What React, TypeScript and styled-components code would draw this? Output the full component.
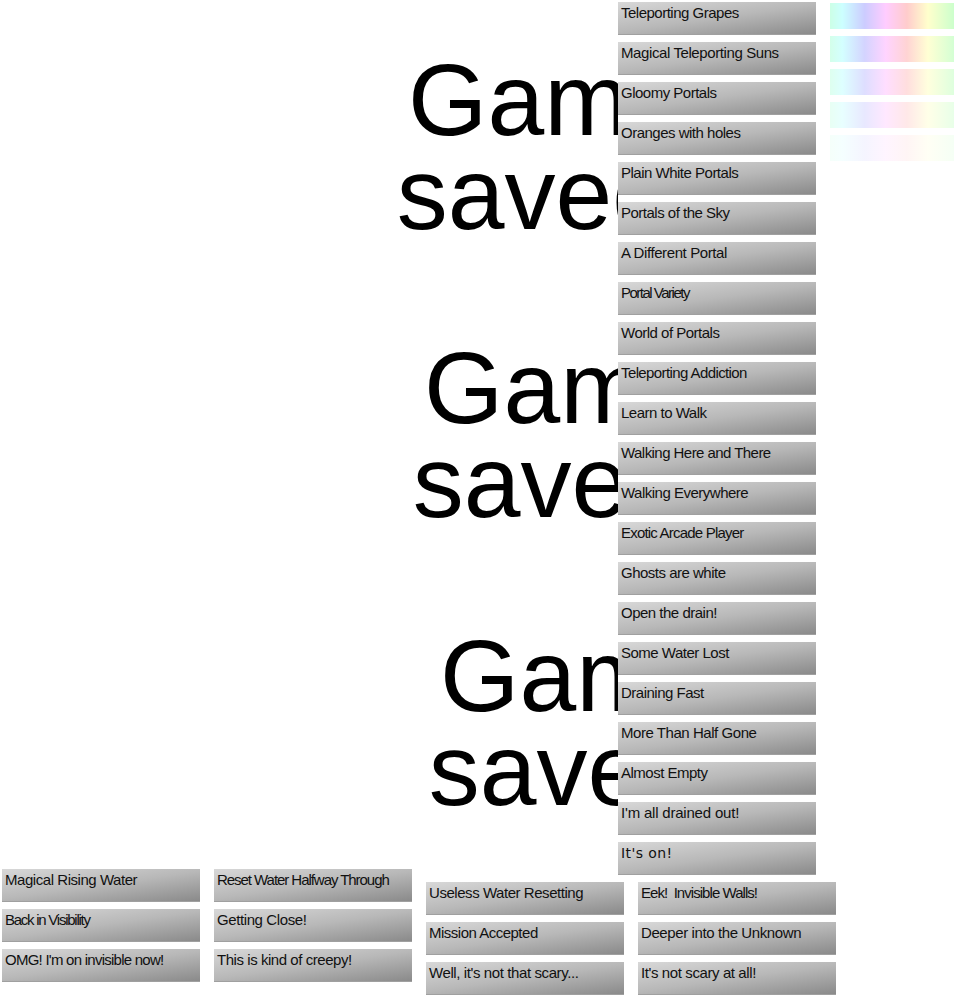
import React from "react";
import styled, { createGlobalStyle } from "styled-components";

const Global = createGlobalStyle`
  html, body { margin: 0; padding: 0; background: #ffffff; }
  body { font-family: "Liberation Sans", Arial, sans-serif; }
`;

const Page = styled.div`
  width: 956px;
  height: 1000px;
  display: flex;
  flex-direction: column;
  overflow: hidden;
`;

const TopSection = styled.div`
  height: 869px;
  display: flex;
  align-items: flex-start;
`;

const ToastArea = styled.div`
  width: 618px;
  height: 869px;
  flex: none;
  overflow: hidden;
  display: flex;
  flex-direction: column;
  align-items: flex-start;
  gap: 100px;
  padding-top: 53px;
  box-sizing: border-box;
`;

const Toast = styled.div<{ $offset: number }>`
  flex: none;
  width: 400px;
  margin-left: ${(p) => p.$offset}px;
  text-align: center;
  font-family: "Liberation Sans", Arial, sans-serif;
  font-size: 102px;
  line-height: 94px;
  color: #000;
`;

const TileColumn = styled.div`
  width: 198px;
  flex: none;
  display: flex;
  flex-direction: column;
  gap: 7px;
  padding-top: 2px;
`;

const Tile = styled.div<{ $spacing: number; $alt?: boolean }>`
  width: 198px;
  height: 33px;
  box-sizing: border-box;
  padding: 1px 3px 0;
  background: linear-gradient(172deg, #d8d8d8 0%, #b8b8b8 50%, #8a8a8a 100%);
  border-bottom: 1px solid #a0a0a0;
  color: #111;
  font-family: ${(p) =>
    p.$alt ? '"DejaVu Sans", Verdana, sans-serif' : '"Liberation Sans", Arial, sans-serif'};
  font-size: ${(p) => (p.$alt ? "14px" : "15px")};
  letter-spacing: ${(p) => p.$spacing}px;
  line-height: 20px;
  white-space: nowrap;
  overflow: hidden;
`;

const SwatchColumn = styled.div`
  flex: none;
  margin-left: 14px;
  padding-top: 3px;
  display: flex;
  flex-direction: column;
  gap: 7px;
`;

const Swatch = styled.div`
  width: 124px;
  height: 26px;
  background: linear-gradient(
    to right,
    #ccffe6 0%,
    #ccffff 10%,
    #ccccff 28%,
    #ffccff 45%,
    #ffcccc 62%,
    #ffffcc 79%,
    #ccffcc 100%
  );
`;

const BottomSection = styled.div`
  display: flex;
  align-items: flex-start;
  gap: 14px;
  padding-left: 2px;
`;

const BottomColumn = styled.div<{ $drop: number }>`
  display: flex;
  flex-direction: column;
  gap: 7px;
  margin-top: ${(p) => p.$drop}px;
`;

type Ach = { label: string; spacing?: number; alt?: boolean };

const rightTiles: Ach[] = [
  { label: "Teleporting Grapes" },
  { label: "Magical Teleporting Suns", spacing: -0.4 },
  { label: "Gloomy Portals" },
  { label: "Oranges with holes" },
  { label: "Plain White Portals" },
  { label: "Portals of the Sky" },
  { label: "A Different Portal", spacing: -0.4 },
  { label: "Portal Variety", spacing: -1.5 },
  { label: "World of Portals" },
  { label: "Teleporting Addiction", spacing: -0.6 },
  { label: "Learn to Walk" },
  { label: "Walking Here and There", spacing: -0.55 },
  { label: "Walking Everywhere" },
  { label: "Exotic Arcade Player", spacing: -0.8 },
  { label: "Ghosts are white" },
  { label: "Open the drain!" },
  { label: "Some Water Lost" },
  { label: "Draining Fast" },
  { label: "More Than Half Gone", spacing: -0.45 },
  { label: "Almost Empty" },
  { label: "I'm all drained out!", spacing: -0.2 },
  { label: "It's on!", alt: true, spacing: 0.4 },
];

const bottomColumns: { drop: number; tiles: Ach[] }[] = [
  {
    drop: 0,
    tiles: [
      { label: "Magical Rising Water", spacing: -0.45 },
      { label: "Back in Visibility", spacing: -1.25 },
      { label: "OMG! I'm on invisible now!", spacing: -0.75 },
    ],
  },
  {
    drop: 0,
    tiles: [
      { label: "Reset Water Halfway Through", spacing: -1.05 },
      { label: "Getting Close!", spacing: -0.4 },
      { label: "This is kind of creepy!", spacing: -0.45 },
    ],
  },
  {
    drop: 13,
    tiles: [
      { label: "Useless Water Resetting", spacing: -0.45 },
      { label: "Mission Accepted" },
      { label: "Well, it's not that scary...", spacing: -0.4 },
    ],
  },
  {
    drop: 13,
    tiles: [
      { label: "Eek!  Invisible Walls!", spacing: -0.95 },
      { label: "Deeper into the Unknown", spacing: -0.4 },
      { label: "It's not scary at all!", spacing: -0.4 },
    ],
  },
];

const swatchOpacity = [1, 0.85, 0.65, 0.45, 0.2];
const toastOffsets = [347, 363, 379];

export default function App() {
  return (
    <Page>
      <Global />
      <TopSection>
        <ToastArea>
          {toastOffsets.map((o, i) => (
            <Toast key={i} $offset={o}>
              Game saved!
            </Toast>
          ))}
        </ToastArea>
        <TileColumn>
          {rightTiles.map((t) => (
            <Tile key={t.label} $spacing={t.spacing ?? -0.5} $alt={t.alt}>
              {t.label}
            </Tile>
          ))}
        </TileColumn>
        <SwatchColumn>
          {swatchOpacity.map((op, i) => (
            <Swatch key={i} style={{ opacity: op }} />
          ))}
        </SwatchColumn>
      </TopSection>
      <BottomSection>
        {bottomColumns.map((col, i) => (
          <BottomColumn key={i} $drop={col.drop}>
            {col.tiles.map((t) => (
              <Tile key={t.label} $spacing={t.spacing ?? -0.5} $alt={t.alt}>
                {t.label.replace(/  /g, "\u00a0 ")}
              </Tile>
            ))}
          </BottomColumn>
        ))}
      </BottomSection>
    </Page>
  );
}
